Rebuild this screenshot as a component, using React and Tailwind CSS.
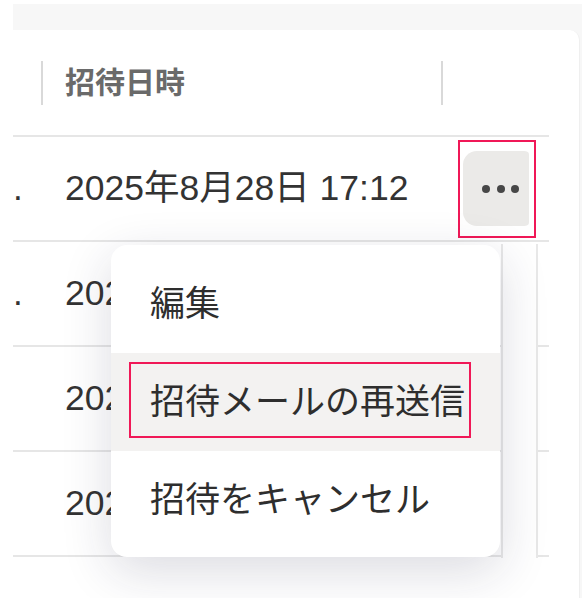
import React from "react";

const rows = [
  { lead: ".", date: "2025年8月28日 17:12" },
  { lead: ".", date: "2025年8月27日 10:05" },
  { lead: "", date: "2025年8月26日 15:40" },
  { lead: "", date: "2025年8月25日 09:21" },
];

function DotsButton() {
  return (
    <div className="relative h-full flex items-center pl-[22px]">
      <div className="w-[66px] h-[75px] overflow-hidden rounded-r-[4px]">
        <button className="w-[75px] h-[75px] rounded-[14px] bg-[#ebeae8] flex items-center justify-center gap-[6.5px]">
          <span className="w-[8px] h-[8px] rounded-full bg-[#474747]" />
          <span className="w-[8px] h-[8px] rounded-full bg-[#474747]" />
          <span className="w-[8px] h-[8px] rounded-full bg-[#474747]" />
        </button>
      </div>
      {/* annotation box */}
      <div className="absolute left-[17px] top-[3px] w-[78px] h-[98px] border-2 border-[#f01857]" />
    </div>
  );
}

export default function App() {
  return (
    <div className="relative w-[582px] h-[598px] bg-white overflow-hidden font-['Liberation_Sans','Noto_Sans_CJK_JP',sans-serif]">
      <div className="ml-[13px] mt-[4px] bg-[#f7f7f7] pt-[26px] h-[594px]">
        <div className="w-[567px] h-full bg-white rounded-tr-[10px] border-r border-[#efefef]">
          <div className="w-[536px]">
            {/* header */}
            <div className="grid grid-cols-[28px_400px_108px] h-[107px] border-b-2 border-[#e6e6e6]">
              <div />
              <div className="flex items-center">
                <div className="w-[2px] h-[44px] bg-[#d9d9d9]" />
                <span className="ml-[22px] text-[30px] font-bold text-[#6a6a6a]">招待日時</span>
              </div>
              <div className="flex items-center">
                <div className="w-[2px] h-[44px] bg-[#d9d9d9]" />
              </div>
            </div>
            {rows.map((r, i) => (
              <div key={i} className="grid grid-cols-[28px_400px_108px] h-[105px] border-b-2 border-[#e6e6e6]">
                <div className="flex items-center overflow-hidden text-[35px] text-[#333]">{r.lead}</div>
                <div className="flex items-center pl-[24px] text-[35.5px] text-[#333] whitespace-nowrap">{r.date}</div>
                <div>{i === 0 && <DotsButton />}</div>
              </div>
            ))}
          </div>
        </div>
      </div>

      {/* sticky column edge under menu */}
      <div className="absolute left-[501px] top-[244px] w-[37px] h-[314px] bg-white border-x-2 border-[#e8e8e8]" />

      {/* dropdown menu */}
      <div className="absolute left-[111px] top-[245px] w-[389px] h-[312px] rounded-[16px] bg-white py-[10px] shadow-[0_14px_50px_rgba(30,30,70,0.16)] text-[35px] text-[#2e2e2e]">
        <div className="h-[98px] flex items-center pl-[39px]">編集</div>
        <div className="relative h-[98px] flex items-center pl-[39px] bg-[#f3f2f1]">
          招待メールの再送信
          <div className="absolute left-[18px] top-[9px] w-[342px] h-[76px] border-2 border-[#f01857]" />
        </div>
        <div className="h-[98px] flex items-center pl-[39px]">招待をキャンセル</div>
      </div>
    </div>
  );
}
